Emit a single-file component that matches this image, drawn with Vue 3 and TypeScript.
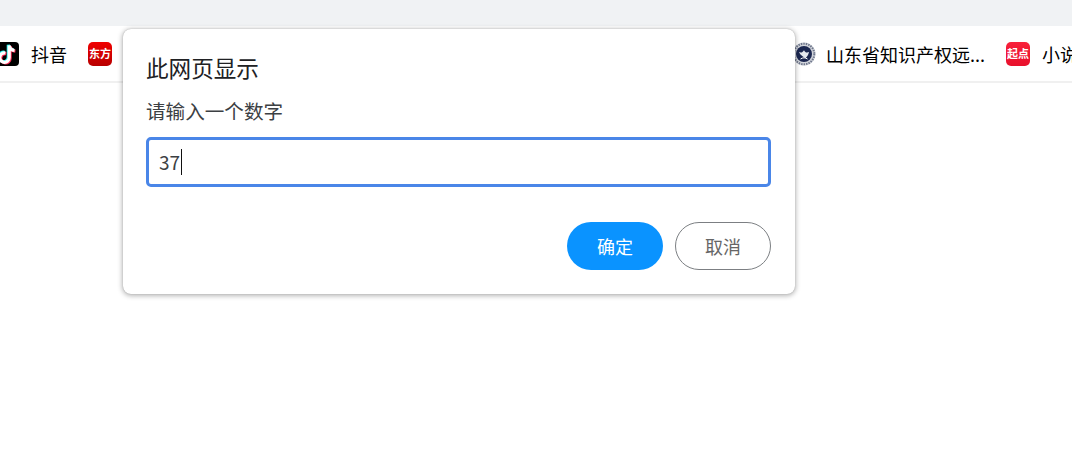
<script setup lang="ts">
const value: string = '37'
</script>

<template>
  <div class="page">
    <div class="topstrip"></div>
    <nav class="bookmarks">
      <div class="mark first">
        <svg class="ico" viewBox="0 0 24 24" width="24" height="24" aria-hidden="true">
          <rect width="24" height="24" rx="4" fill="#000" />
          <g fill="none" stroke-width="3.2" stroke-linecap="butt">
            <path d="M10.400 11a4.700 4.700 0 1 0 3.800 4.600V3.500c.5 2.900 2.400 4.700 5.300 5" stroke="#25f4ee" transform="translate(-.9 -.7)" />
            <path d="M10.400 11a4.700 4.700 0 1 0 3.800 4.600V3.500c.5 2.900 2.400 4.700 5.300 5" stroke="#fe2c55" transform="translate(.9 .7)" />
            <path d="M10.400 11a4.700 4.700 0 1 0 3.800 4.600V3.500c.5 2.900 2.400 4.700 5.300 5" stroke="#fff" />
          </g>
        </svg>
        <span class="label">抖音</span>
      </div>
      <div class="mark">
        <span class="tile dongfang">东方</span>
      </div>
      <div class="spacer"></div>
      <div class="mark">
        <svg class="ico seal" viewBox="0 0 24 24" width="24" height="24" aria-hidden="true">
          <circle cx="12" cy="12" r="11.500" fill="#d3d6dc" />
          <circle cx="12" cy="12" r="10.300" fill="none" stroke="#6f778c" stroke-width="2" stroke-dasharray="1.500 1" />
          <circle cx="12" cy="12" r="8" fill="#1b2750" />
          <path d="M7 10c2.200 1 3.400.5 5-1.800 1.200 2.300 2.800 2.800 5 1.800-.5 3.300-2.200 4.500-3.400 6.200C12 15 8.600 13.800 7 10z" fill="#e6e9ef" />
          <path d="M8.500 17c2.300-1.600 4.700-1.600 7 0" fill="none" stroke="#fff" stroke-width="1" />
        </svg>
        <span class="label">山东省知识产权远...</span>
      </div>
      <div class="mark">
        <span class="tile qidian">起点</span>
        <span class="label">小说</span>
      </div>
    </nav>

    <div class="dialog" role="dialog">
      <h1 class="title">此网页显示</h1>
      <p class="prompt">请输入一个数字</p>
      <div class="field">
        <span class="value">{{ value }}</span><span class="caret"></span>
      </div>
      <div class="actions">
        <button class="btn primary" type="button">确定</button>
        <button class="btn ghost" type="button">取消</button>
      </div>
    </div>
  </div>
</template>

<style>
html, body { margin: 0; background: #fff; overflow: hidden; }
</style>

<style scoped>
.page {
  position: relative;
  width: 1072px;
  height: 468px;
  overflow: hidden;
  background: #fff;
  font-family: "Noto Sans CJK SC", "Noto Sans", sans-serif;
}
.topstrip {
  height: 26px;
  background: #f0f2f4;
}
.bookmarks {
  display: flex;
  align-items: center;
  height: 55px;
  border-bottom: 2px solid #f0f0f0;
  margin-left: -5px;
  white-space: nowrap;
}
.mark {
  display: flex;
  align-items: center;
  flex: none;
  gap: 12px;
  margin-right: 21px;
}
.spacer {
  flex: none;
  width: 659px;
}
.ico { display: block; flex: none; }
.seal { margin-right: -2px; }
.label {
  font-size: 18px;
  line-height: 24px;
  color: #000;
}
.tile {
  display: flex;
  align-items: center;
  justify-content: center;
  flex: none;
  width: 24px;
  height: 24px;
  border-radius: 5px;
  color: #fff;
  font-size: 11px;
  font-weight: 700;
  line-height: 1;
  white-space: nowrap;
}
.dongfang { background: linear-gradient(#f00000, #b80000); }
.qidian { background: linear-gradient(#f8213a, #e8102c); }
.dialog {
  position: absolute;
  left: 123px;
  top: 29px;
  box-sizing: border-box;
  width: 672px;
  height: 265px;
  padding: 22px 24px 24px 23px;
  background: #fff;
  border-radius: 8px;
  box-shadow: 0 0 1px rgba(0, 0, 0, .3), 0 1px 5px 1px rgba(0, 0, 0, .28);
}
.title {
  margin: 0;
  font-size: 22.600px;
  font-weight: 400;
  line-height: 34px;
  color: #202124;
}
.prompt {
  margin: 12px 0 0;
  font-size: 19.600px;
  line-height: 28px;
  color: #3c4043;
}
.field {
  display: flex;
  align-items: center;
  box-sizing: border-box;
  height: 50px;
  margin-top: 12px;
  padding: 0 10px;
  border: 3px solid #4a86e8;
  border-radius: 5px;
  font-size: 19px;
  color: #3c4043;
}
.value { line-height: 24px; }
.caret {
  display: block;
  width: 1px;
  height: 26px;
  margin-left: 1px;
  background: #111;
}
.actions {
  display: flex;
  justify-content: flex-end;
  gap: 12px;
  margin-top: 35px;
}
.btn {
  box-sizing: border-box;
  width: 96px;
  height: 48px;
  padding: 0;
  border-radius: 24px;
  font-family: inherit;
  font-size: 18px;
  line-height: 24px;
  background: #fff;
}
.primary {
  border: 0;
  background: #0a93ff;
  color: #fff;
}
.ghost {
  border: 1px solid #7c7f83;
  color: #666666;
}
</style>
